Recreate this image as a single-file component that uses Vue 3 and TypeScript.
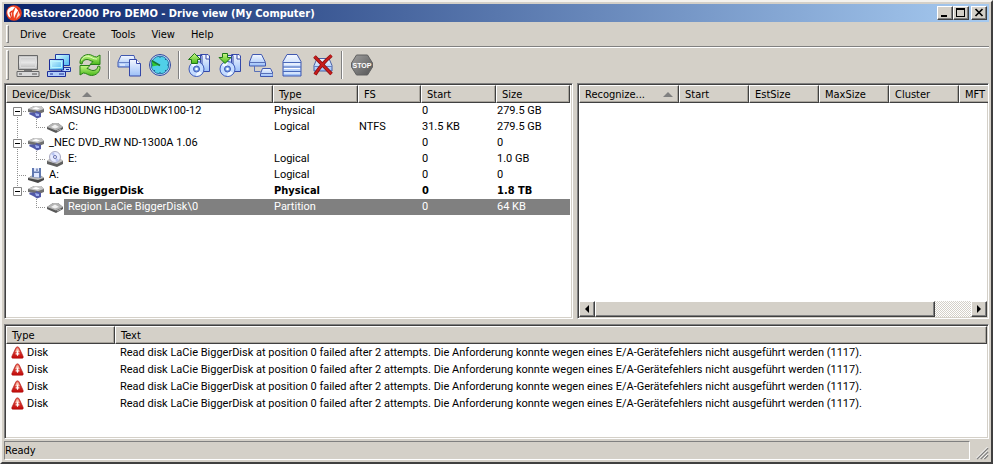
<script setup lang="ts">
import { ref } from 'vue'

type DeviceIcon = 'device' | 'volume' | 'optical' | 'floppy'

interface DeviceRow {
  name: string
  type: string
  fs: string
  start: string
  size: string
  level: 0 | 1
  icon: DeviceIcon
  expandable?: boolean
  bold?: boolean
  up?: boolean
  down?: boolean
}

interface LogRow {
  type: string
  text: string
}

const menus: string[] = ['Drive', 'Create', 'Tools', 'View', 'Help']

const devices: DeviceRow[] = [
  { name: 'SAMSUNG HD300LDWK100-12', type: 'Physical', fs: '', start: '0', size: '279.5 GB', level: 0, icon: 'device', expandable: true, down: true },
  { name: 'C:', type: 'Logical', fs: 'NTFS', start: '31.5 KB', size: '279.5 GB', level: 1, icon: 'volume', up: true, down: true },
  { name: '_NEC DVD_RW ND-1300A 1.06', type: '', fs: '', start: '0', size: '0', level: 0, icon: 'device', expandable: true, up: true, down: true },
  { name: 'E:', type: 'Logical', fs: '', start: '0', size: '1.0 GB', level: 1, icon: 'optical', up: true, down: true },
  { name: 'A:', type: 'Logical', fs: '', start: '0', size: '0', level: 0, icon: 'floppy', up: true, down: true },
  { name: 'LaCie BiggerDisk', type: 'Physical', fs: '', start: '0', size: '1.8 TB', level: 0, icon: 'device', expandable: true, bold: true, up: true },
  { name: 'Region LaCie BiggerDisk\\0', type: 'Partition', fs: '', start: '0', size: '64 KB', level: 1, icon: 'volume' },
]

const selected = ref<number>(6)

const message =
  'Read disk LaCie BiggerDisk at position 0 failed after 2 attempts. Die Anforderung konnte wegen eines E/A-Gerätefehlers nicht ausgeführt werden (1117).'
const log: LogRow[] = Array.from({ length: 4 }, () => ({ type: 'Disk', text: message }))

const fileColumns: string[] = ['Start', 'EstSize', 'MaxSize', 'Cluster', 'MFT']
</script>

<template>
  <div class="window">
    <svg class="defs" width="0" height="0" aria-hidden="true">
      <defs>
        <linearGradient id="blue" x1="0" y1="0" x2="0" y2="1">
          <stop offset="0" stop-color="#f4f8ff" />
          <stop offset="1" stop-color="#9cc0f8" />
        </linearGradient>
        <linearGradient id="sky" x1="0" y1="0" x2="1" y2="1">
          <stop offset="0" stop-color="#d8fcff" />
          <stop offset="1" stop-color="#48b4f0" />
        </linearGradient>
        <linearGradient id="grey" x1="0" y1="0" x2="0" y2="1">
          <stop offset="0" stop-color="#c4c4c4" />
          <stop offset="0.5" stop-color="#e6e6e6" />
          <stop offset="1" stop-color="#b4b4b4" />
        </linearGradient>
        <linearGradient id="green" x1="0" y1="0" x2="0" y2="1">
          <stop offset="0" stop-color="#c8f888" />
          <stop offset="1" stop-color="#48b818" />
        </linearGradient>
        <linearGradient id="red" x1="0" y1="0" x2="0" y2="1">
          <stop offset="0" stop-color="#e86050" />
          <stop offset="1" stop-color="#c00808" />
        </linearGradient>
        <linearGradient id="steel" x1="0" y1="0" x2="1" y2="1">
          <stop offset="0" stop-color="#a0a0a0" />
          <stop offset="1" stop-color="#545454" />
        </linearGradient>
        <symbol id="pages-disc" viewBox="0 0 24 24">
          <path d="M9.500 2.500H15v13h-5zM13.500 1.500h7.500l1.500 1.500v15.500h-9z" fill="url(#blue)" stroke="#3448a8" />
          <path d="M19 1.500v4.500h3.500" fill="#fff" stroke="#3448a8" />
          <circle cx="9.500" cy="16" r="7.500" fill="#c4dcff" stroke="#3c58b8" />
          <path d="M9.500 16 4 12A7 7 0 0 1 9.500 9zM9.500 16l5.500 4a7 7 0 0 1-5.500 3z" fill="#f0f8ff" />
          <circle cx="9.500" cy="16" r="3" fill="#78a0e0" stroke="#3c58b8" />
          <circle cx="9.500" cy="16" r="1.300" fill="#fff" />
        </symbol>
      </defs>
    </svg>

    <header class="titlebar">
      <svg class="app-icon" viewBox="0 0 16 16" aria-hidden="true">
        <circle cx="8" cy="8" r="7.800" fill="#f04020" />
        <path d="M1.500 5.500C3 2 6.500 1 9 2.200L5.500 6.500 6 12.500C3.500 14 .5 9.500 1.500 5.500z" fill="#fff" />
        <path d="M9.500 2.500 12.500 5 10 8.500l-2 4.800L7.500 8z" fill="#fff" />
        <path d="M5.800 6 4 8l1.500 5M11 3l3 4-3 5" fill="none" stroke="#e02810" stroke-width="1.200" />
        <path d="m12.500 6 1.500 4-4 4z" fill="#ffd8c8" />
      </svg>
      <h1>Restorer2000 Pro DEMO - Drive view (My Computer)</h1>
      <div class="caption-buttons">
        <button type="button" class="raised" aria-label="Minimize">
          <svg viewBox="0 0 12 10"><path d="M2 7h6v2H2z" /></svg>
        </button>
        <button type="button" class="raised" aria-label="Maximize">
          <svg viewBox="0 0 12 10"><path d="M1 0h9v9H1zM2 2v6h7V2z" fill-rule="evenodd" /></svg>
        </button>
        <button type="button" class="raised close" aria-label="Close">
          <svg viewBox="0 0 12 10"><path d="m2.500 1 7 7m0-7-7 7" fill="none" stroke="#000" stroke-width="1.700" /></svg>
        </button>
      </div>
    </header>

    <nav class="menubar" aria-label="Main menu">
      <span class="grip"></span>
      <button v-for="menu in menus" :key="menu" type="button">{{ menu }}</button>
    </nav>

    <div class="toolbar" role="toolbar" aria-label="Tools">
      <span class="grip"></span>
      <button type="button" aria-label="Open drive">
        <svg viewBox="0 0 24 24">
          <path d="M2.500 2.500h19v14h-19z" fill="url(#grey)" stroke="#686868" />
          <path d="M4.500 4.500h15v10h-15z" fill="none" stroke="#dcdcdc" />
          <path d="M8 17.500h8" stroke="#787878" />
          <path d="M1 18.500h22v5H1z" fill="#d8d8d8" stroke="#686868" />
          <path d="M3 21h3m10 0h5" stroke="#505050" />
        </svg>
      </button>
      <button type="button" aria-label="Connect to network computer">
        <svg viewBox="0 0 24 24">
          <path d="M8.500 1.500h14v11h-14z" fill="url(#sky)" stroke="#2038a0" />
          <path d="M14.500 14.500h9v4h-9z" fill="#b8d4ff" stroke="#2038a0" />
          <path d="M2.500 6.500h14v10.500h-14z" fill="url(#sky)" stroke="#1c2c98" />
          <path d="M4.500 8.500h10v6h-10z" fill="none" stroke="#b8f4ff" />
          <path d="M.5 18.500h18v5H.5z" fill="#b0ccf8" stroke="#1c2c98" />
          <path d="M3 21h3m6 0h5m2-4.500h3" stroke="#1c2c98" />
        </svg>
      </button>
      <button type="button" aria-label="Refresh">
        <svg viewBox="0 0 24 24">
          <path d="M2 10.500C1.500 5 6 1.500 10.500 1.500c3.500 0 5 2.500 8 2.500l3.500-2v9.500h-10l3-3C12 8 11.500 6.500 9 6.500c-3 0-4.500 1.500-5 4.500z" fill="url(#green)" stroke="#288018" stroke-linejoin="round" />
          <path d="M22 13.500C22.500 19 18 22.500 13.500 22.500c-3.500 0-5-2.500-8-2.500L2 22v-9.500h10l-3 3c3 .5 3.500 2 6 2 3 0 4.500-1.500 5-4.500z" fill="url(#green)" stroke="#288018" stroke-linejoin="round" />
          <path d="M3.500 7.500C5 4 8 2.500 11 3.500s4 2.500 8 2.500" fill="none" stroke="#e0ffb8" />
        </svg>
      </button>
      <span class="divider"></span>
      <button type="button" aria-label="Create image">
        <svg viewBox="0 0 24 24">
          <path d="M4 2.500h13l2 7-2 4.500H1V9z" fill="url(#blue)" stroke="#4058b0" />
          <path d="M1 9.500h12" stroke="#6884c8" />
          <path d="M3 12h5" stroke="#fff" />
          <path d="M12.500 6.500h7l4 4v12.500h-11z" fill="url(#blue)" stroke="#3448a8" />
          <path d="M19.500 6.500v4h4" fill="#fff" stroke="#3448a8" />
        </svg>
      </button>
      <button type="button" aria-label="Scan">
        <svg viewBox="0 0 24 24">
          <circle cx="12" cy="12" r="10.500" fill="#c4dcf8" stroke="#3048a0" />
          <circle cx="12" cy="12" r="8.800" fill="#50d0e8" stroke="#2878a8" />
          <path d="M12 12 4 7.500v6z" fill="#30c830" />
          <path d="m12 12.500-8.500-5" stroke="#187838" stroke-width="1.500" />
          <path d="M12 3.500v1.500m0 14v1.500M3.500 12H5m14 0h1.500M18 6l-1 1m1 11-1-1M6 18l1-1" stroke="#205898" />
        </svg>
      </button>
      <span class="divider"></span>
      <button type="button" aria-label="Open image">
        <svg viewBox="0 0 24 24">
          <use href="#pages-disc" />
          <path d="m7.500.5 6 6h-3v4h-6v-4h-3z" fill="url(#green)" stroke="#207818" />
        </svg>
      </button>
      <button type="button" aria-label="Save image">
        <svg viewBox="0 0 24 24">
          <use href="#pages-disc" />
          <path d="M4.500.5h5v4h3.500l-6 6-6-6h3.500z" fill="url(#green)" stroke="#207818" />
        </svg>
      </button>
      <button type="button" aria-label="Create region">
        <svg viewBox="0 0 24 24">
          <path d="M3.500 1.500h9l4 8v3.500H.5V9z" fill="url(#blue)" stroke="#4058b0" />
          <path d="M.5 9.500h16" stroke="#5870b8" />
          <path d="M13.500 15.500h8l2.500 5v3H11.500v-3z" fill="url(#blue)" stroke="#4058b0" />
          <path d="M12 20.500h12M5.500 13v5.500h6" fill="none" stroke="#5870b8" />
        </svg>
      </button>
      <button type="button" aria-label="Create virtual volume">
        <svg viewBox="0 0 24 24">
          <path d="M7 1.500h10l4 7v14.500h-18V8.500z" fill="url(#blue)" stroke="#4058b0" />
          <path d="M3 9.500h18M3 14h18M3 18.500h18" stroke="#4868b8" />
          <path d="M4 11h16M4 15.500h16M4 20h16" stroke="#fff" />
        </svg>
      </button>
      <button type="button" aria-label="Delete">
        <svg viewBox="0 0 24 24">
          <path d="M6 5.500h12l3 7v5.500H3v-5.500z" fill="url(#blue)" stroke="#4860a8" />
          <path d="M3 13.500h18" stroke="#6880c0" />
          <path d="m3.500 3.500 17 17.500M20.500 2.500C14 8 8 15 4 21.500" fill="none" stroke="#881010" stroke-width="3.600" />
          <path d="m3.500 3.500 17 17.500M20.500 2.500C14 8 8 15 4 21.500" fill="none" stroke="#c81c1c" stroke-width="2" />
        </svg>
      </button>
      <span class="divider"></span>
      <button type="button" aria-label="Stop">
        <svg viewBox="0 0 24 24">
          <path d="M6.500 2h11l5 8v4l-5 8h-11l-5-8v-4z" fill="url(#steel)" stroke="#606060" />
          <text x="12" y="15" text-anchor="middle" class="stop-text">STOP</text>
        </svg>
      </button>
    </div>

    <main class="workspace">
      <section class="pane sunken devices" aria-label="Devices">
        <table class="device-table">
          <colgroup>
            <col class="c-name" />
            <col class="c-type" />
            <col class="c-fs" />
            <col class="c-start" />
            <col class="c-size" />
          </colgroup>
          <thead>
            <tr>
              <th scope="col">
                <span class="head">Device/Disk<svg class="sort" viewBox="0 0 10 5"><path d="m5 0 5 5H0z" /></svg></span>
              </th>
              <th scope="col">Type</th>
              <th scope="col">FS</th>
              <th scope="col">Start</th>
              <th scope="col">Size</th>
            </tr>
          </thead>
          <tbody>
            <tr
              v-for="(row, i) in devices"
              :key="row.name"
              :class="{ bold: row.bold, selected: selected === i }"
              @click="selected = i"
            >
              <td class="tree">
                <div class="tree-cell">
                  <svg v-if="row.level === 0" class="guide" viewBox="0 0 21 16" aria-hidden="true">
                    <path v-if="row.up" class="dots" d="M11.500 0v8" />
                    <path v-if="row.down" class="dots" d="M11.500 8v8" />
                    <path class="dots" d="M11 8.500h10" />
                    <g v-if="row.expandable">
                      <path d="M7.500 4.500h8v8h-8z" fill="#fff" stroke="#848484" />
                      <path d="M9 8.500h5" stroke="#000" />
                    </g>
                  </svg>
                  <svg v-else class="guide child" viewBox="0 0 40 16" aria-hidden="true">
                    <path v-if="row.down" class="dots" d="M11.500 0v16" />
                    <path class="dots" d="M30.500 0v8" />
                    <path class="dots" d="M30 8.500h10" />
                  </svg>

                  <svg v-if="row.icon === 'device'" class="node" viewBox="0 0 18 16" aria-hidden="true">
                    <path d="M1 6 7 3h7l3 3v3l-5 2-11-2z" fill="#707070" />
                    <path d="m1 6 6-3h7l3 3-6 2z" fill="#c8c8c8" />
                    <path d="m5 5.500 4-1.500 4 1.500-3 1z" fill="#fff" />
                    <path d="M3 9.500h6V8l5 2v4l-4 1.500-3-2L2 11z" fill="#5058a8" />
                    <path d="m8 10 4 1v2H9z" fill="#a0b0f0" />
                  </svg>
                  <svg v-else-if="row.icon === 'volume'" class="node" viewBox="0 0 18 16" aria-hidden="true">
                    <path d="m1 8 6-4h5l5 4v2l-7 4-9-4z" fill="#585858" />
                    <path d="m1 8 6-4h5l5 4-7 3.500z" fill="#b4b4b4" />
                    <path d="m5 8 4-2.500L13 8l-4 1.500z" fill="#f0f0f0" />
                    <path d="m11 12 4-2" stroke="#b8b8b8" />
                  </svg>
                  <svg v-else-if="row.icon === 'optical'" class="node" viewBox="0 0 18 16" aria-hidden="true">
                    <path d="m1 10 4-3h8l4 3v3l-6 3-10-3z" fill="#606060" />
                    <path d="m1 10 4-3h8l4 3-6 3z" fill="#c8c8c8" />
                    <circle cx="9" cy="6" r="5.500" fill="#e8ecff" stroke="#a8a8c0" />
                    <path d="m9 6-4-3 3-2zM9 6l4 3-3 2z" fill="#b8c4f0" />
                    <circle cx="9" cy="6" r="1.500" fill="#fff" stroke="#6870b0" />
                  </svg>
                  <svg v-else class="node" viewBox="0 0 18 16" aria-hidden="true">
                    <path d="m1 11 5-3h7l4 3v2l-6 3-10-3z" fill="#484848" />
                    <path d="m1 11 5-3h7l4 3-6 2z" fill="#b8b8b8" />
                    <path d="M5 1h9v10l-9-1z" fill="#6078b0" />
                    <path d="M7 1h5v3.500H7zM7 6h5v4.500L7 10z" fill="#e0e8ff" />
                    <path d="M10 1.500v2.500" stroke="#405080" />
                  </svg>
                  <span class="name">{{ row.name }}</span>
                </div>
              </td>
              <td>{{ row.type }}</td>
              <td>{{ row.fs }}</td>
              <td>{{ row.start }}</td>
              <td>{{ row.size }}</td>
            </tr>
          </tbody>
        </table>
      </section>

      <section class="pane sunken files" aria-label="Recognized partitions">
        <table class="files-table">
          <thead>
            <tr>
              <th scope="col" class="c-rec">
                <span class="head spread">Recognize...<svg class="sort" viewBox="0 0 10 5"><path d="m5 0 5 5H0z" /></svg></span>
              </th>
              <th v-for="col in fileColumns" :key="col" scope="col">{{ col }}</th>
            </tr>
          </thead>
        </table>
        <div class="scrollbar">
          <button type="button" class="raised" aria-label="Scroll left">
            <svg viewBox="0 0 12 12"><path d="M8 2v8L4 6z" /></svg>
          </button>
          <div class="thumb raised"></div>
          <div class="track"></div>
          <button type="button" class="raised" aria-label="Scroll right">
            <svg viewBox="0 0 12 12"><path d="M4 2v8l4-4z" /></svg>
          </button>
        </div>
      </section>

      <section class="pane sunken log" aria-label="Log">
        <table class="log-table">
          <colgroup>
            <col class="c-kind" />
            <col />
          </colgroup>
          <thead>
            <tr>
              <th scope="col">Type</th>
              <th scope="col">Text</th>
            </tr>
          </thead>
          <tbody>
            <tr v-for="(entry, i) in log" :key="i">
              <td>
                <span class="kind">
                  <svg class="alert" viewBox="0 0 14 14" aria-hidden="true">
                    <path d="M7 .8c1 0 1.600.8 2.200 2L13 11c.6 1.400 0 2.200-1.400 2.200H2.400C1 13.200.4 12.400 1 11l3.800-8.200C5.400 1.600 6 .8 7 .8z" fill="url(#red)" stroke="#a81010" stroke-width="0.600" />
                    <path d="M7 2.500c.6 0 1 .5 1.500 1.500l1 2.500c-1.500.8-3.500.8-5 0l1-2.500c.5-1 .9-1.500 1.500-1.500z" fill="#f8b8a8" />
                    <path d="M7 5v5.500M5 8.500h4" stroke="#fff" stroke-width="1.300" />
                  </svg>{{ entry.type }}
                </span>
              </td>
              <td>{{ entry.text }}</td>
            </tr>
          </tbody>
        </table>
      </section>
    </main>

    <footer class="statusbar">
      <div class="status" role="status">Ready</div>
      <svg class="resize" viewBox="0 0 14 14" aria-hidden="true">
        <path d="M1 13 13 1M5 13l8-8M9 13l4-4" stroke="#808080" stroke-width="1.500" />
        <path d="M0 12.500 12.500 0M4 12.500 12.500 4M8 12.500 12.500 8" stroke="#fff" />
      </svg>
    </footer>
  </div>
</template>

<style>
body {
  margin: 0;
}
</style>

<style scoped>
.window {
  box-sizing: border-box;
  display: flex;
  flex-direction: column;
  min-height: 100vh;
  padding: 2px;
  border: 2px solid;
  border-color: #f4f2ee #404040 #404040 #f4f2ee;
  background: #d4d0c8;
  color: #000;
  font-family: "DejaVu Sans Condensed", "DejaVu Sans", sans-serif;
  font-size: 11px;
  line-height: 16px;
  cursor: default;
}

.defs {
  position: absolute;
}

svg {
  display: block;
  flex: none;
}

button {
  margin: 0;
  padding: 0;
  border: 0;
  background: none;
  color: inherit;
  font: inherit;
}

.raised {
  box-sizing: border-box;
  border: 1px solid;
  border-color: #fff #404040 #404040 #fff;
  background: #d4d0c8;
  box-shadow: inset -1px -1px #808080;
}

.sunken {
  border: 1px solid;
  border-color: #808080 #fff #fff #808080;
  box-shadow: inset 1px 1px #404040, inset -1px -1px #d4d0c8;
}

.titlebar {
  display: flex;
  align-items: center;
  height: 18px;
  padding: 0 2px;
  background: linear-gradient(to right, #0a246a, #a6caf0);
}

.app-icon {
  width: 16px;
  height: 16px;
}

h1 {
  flex: 1;
  margin: 0 0 0 1px;
  padding-top: 2px;
  color: #fff;
  font-size: 11px;
  font-weight: bold;
  line-height: 16px;
  white-space: nowrap;
}

.caption-buttons {
  display: flex;
}

.caption-buttons button {
  display: grid;
  place-items: center;
  width: 16px;
  height: 14px;
}

.caption-buttons svg {
  width: 12px;
  height: 10px;
}

.caption-buttons .close {
  margin-left: 2px;
}

.menubar {
  display: flex;
  align-items: center;
  height: 24px;
  border-bottom: 1px solid #808080;
  box-shadow: 0 1px #fff;
}

.menubar button {
  padding: 2px 8px 0;
  line-height: 20px;
}

.grip {
  align-self: stretch;
  width: 1px;
  margin: 3px 3px 3px 2px;
  border: 1px solid;
  border-color: #fff #808080 #808080 #fff;
}

.toolbar {
  display: flex;
  align-items: center;
  height: 36px;
}

.toolbar button {
  display: grid;
  place-items: center;
  width: 31px;
  height: 30px;
}

.toolbar button svg {
  width: 24px;
  height: 24px;
}

.divider {
  width: 1px;
  height: 28px;
  margin: 0 3px;
  border-left: 1px solid #808080;
  background: #fff;
}

.stop-text {
  fill: #fff;
  font-family: "Liberation Sans", Arial, sans-serif;
  font-size: 7px;
  font-weight: bold;
}

.workspace {
  flex: 1;
  display: grid;
  grid-template-columns: 569fr 412fr;
  grid-template-rows: 236fr 115fr;
  gap: 5px 4px;
}

.pane {
  box-sizing: border-box;
  display: flex;
  flex-direction: column;
  align-items: flex-start;
  min-width: 0;
  padding: 1px;
  overflow: hidden;
  background: #fff;
}

.log {
  grid-column: 1 / -1;
}

table {
  border-collapse: separate;
  border-spacing: 0;
  table-layout: fixed;
}

th {
  box-sizing: border-box;
  height: 18px;
  padding: 1px 5px 0;
  border: 1px solid;
  border-color: #fff #404040 #404040 #fff;
  background: #d4d0c8;
  box-shadow: inset -1px -1px #a8a49c;
  font-weight: normal;
  line-height: 15px;
  text-align: left;
  white-space: nowrap;
}

td {
  height: 16px;
  padding: 0 1px;
  font-family: Roboto, "Liberation Sans", sans-serif;
  line-height: 16px;
  white-space: nowrap;
}

.head {
  display: flex;
  align-items: center;
  gap: 12px;
}

.spread {
  justify-content: space-between;
}

.sort {
  width: 10px;
  height: 5px;
  fill: #808080;
}

.device-table {
  width: 564px;
}

.c-name {
  width: 267px;
}

.c-type {
  width: 85px;
}

.c-fs {
  width: 63px;
}

.c-start {
  width: 75px;
}

.c-size {
  width: 74px;
}

.tree {
  padding: 0;
}

.tree-cell {
  display: flex;
}

.guide {
  width: 21px;
  height: 16px;
}

.guide.child {
  width: 40px;
}

.dots {
  fill: none;
  stroke: #909090;
  stroke-dasharray: 1 1;
}

.node {
  width: 18px;
  height: 16px;
}

.name {
  flex: 1;
  padding-left: 4px;
}

.bold td {
  font-family: "DejaVu Sans Condensed", "DejaVu Sans", sans-serif;
  font-weight: bold;
}

.selected .name,
.selected td:not(.tree) {
  background: #808080;
  color: #fff;
}

.files-table {
  width: 450px;
}

.c-rec {
  width: 100px;
}

.scrollbar {
  display: flex;
  width: 100%;
  height: 16px;
  margin-top: auto;
}

.scrollbar button {
  display: grid;
  place-items: center;
  width: 16px;
}

.scrollbar svg {
  width: 12px;
  height: 12px;
}

.thumb {
  flex: 340;
}

.track {
  flex: 36;
  background: repeating-conic-gradient(#fff 0 25%, #d4d0c8 0 50%) 0 0 / 2px 2px;
}

.log-table {
  width: 100%;
}

.c-kind {
  width: 109px;
}

.log-table td {
  height: 17px;
  padding: 0 5px;
  line-height: 17px;
}

.kind {
  display: flex;
  align-items: center;
  gap: 3px;
}

.alert {
  width: 13px;
  height: 13px;
}

.statusbar {
  display: flex;
  align-items: flex-end;
  justify-content: space-between;
  gap: 6px;
  margin-top: 2px;
}

.status {
  flex: 1;
  padding-top: 1px;
  border: 1px solid;
  border-color: #808080 #fff #fff #808080;
  line-height: 16px;
}

.resize {
  width: 13px;
  height: 13px;
}
</style>
